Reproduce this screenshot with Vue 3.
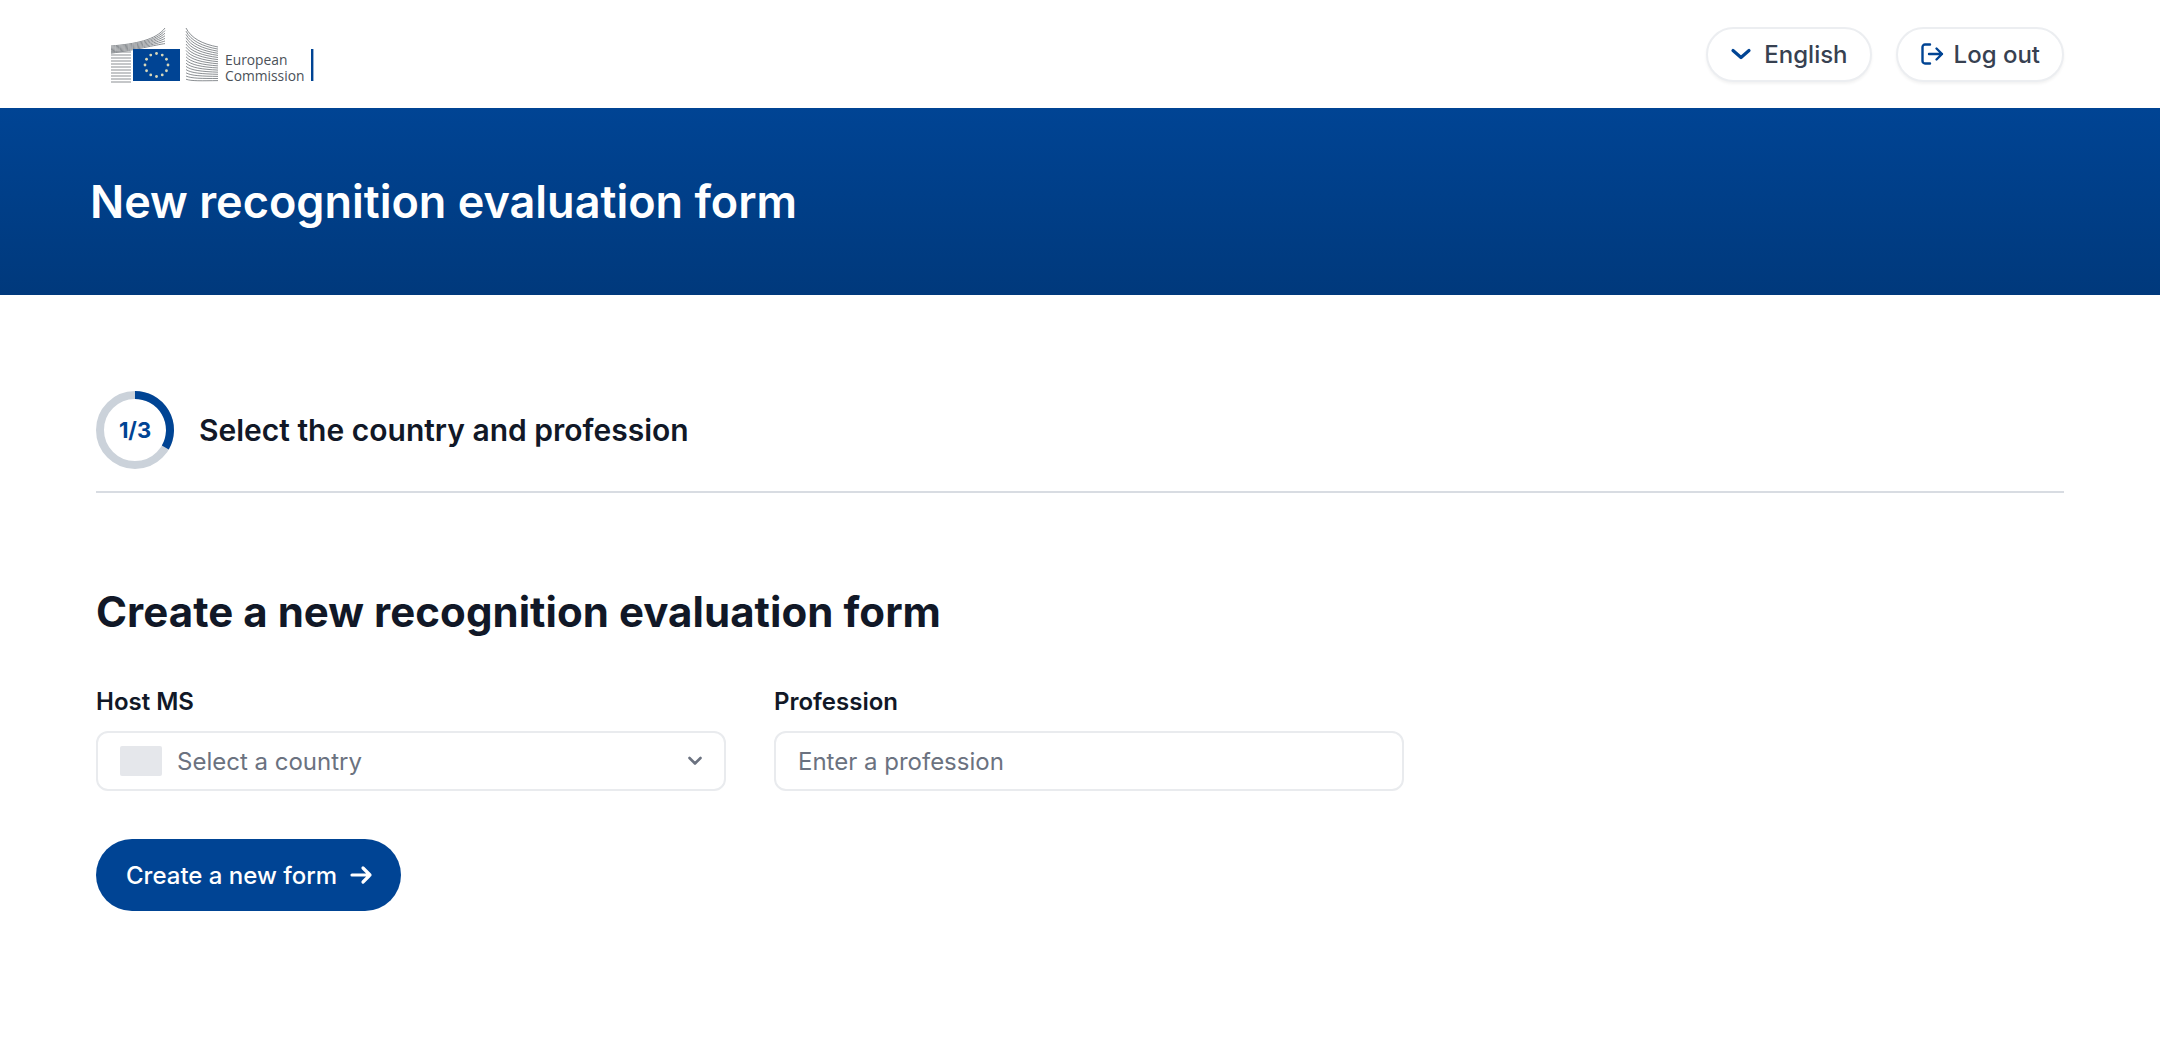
<script setup>
const stars = Array.from({ length: 12 }, (_, i) => {
  const a = (i * Math.PI) / 6
  return { x: 156.5 + 11.5 * Math.sin(a), y: 65 - 11.5 * Math.cos(a) }
})
const frontLines = Array.from({ length: 11 }, (_, i) => 50 + i * 3)
const upperLines = Array.from({ length: 7 }, (_, i) => i)
const rightLines = Array.from({ length: 17 }, (_, i) => i)
</script>

<template>
  <div class="page">
    <header class="topbar">
      <svg class="logo" width="220" height="60" viewBox="105 25 220 60" aria-label="European Commission logo">
        <g stroke="#8b8f93" stroke-width="1" fill="none">
          <path v-for="i in upperLines" :key="'u' + i" :d="`M111 ${46 + i * 1.2} C135 ${44 + i} 156 ${40 + i * 0.8} 165 ${28 + i * 2.6}`" />
          <path v-for="y in frontLines" :key="'f' + y" :d="`M111 ${y + 2} H131`" />
          <path v-for="i in rightLines" :key="'r' + i" :d="`M186 ${28 + i * 3.2} C191 ${38 + i * 2.7} 202 ${44 + i * 2.3} 218 ${47 + i * 2.1}`" />
        </g>
        <rect x="133" y="49" width="47" height="32" fill="#004494" />
        <circle v-for="(s, i) in stars" :key="i" :cx="s.x" :cy="s.y" r="1.4" fill="#d9d8b8" />
        <text x="225" y="65" class="logo-text">European</text>
        <text x="225" y="81" class="logo-text">Commission</text>
        <rect x="311" y="49" width="2.400" height="32" fill="#004494" />
      </svg>
      <div class="top-actions">
        <button class="pill lang">
          <svg width="22" height="22" viewBox="0 0 22 22" fill="none" stroke="#004494" stroke-width="3.200" stroke-linecap="round" stroke-linejoin="round"><path d="M3 7.500l8 7 8-7" /></svg>
          English
        </button>
        <button class="pill">
          <svg width="24" height="24" viewBox="0 0 24 24" fill="none" stroke="#004494" stroke-width="2.400" stroke-linecap="round" stroke-linejoin="round"><path d="M10 2.500H5a2.500 2.500 0 0 0-2.500 2.500v14A2.500 2.500 0 0 0 5 21.500h5" /><path d="M9 12h13M16.500 6.500L22 12l-5.500 5.500" /></svg>
          Log out
        </button>
      </div>
    </header>

    <section class="banner">
      <h1>New recognition evaluation form</h1>
    </section>

    <main class="content">
      <div class="step">
        <div class="ring">
          <svg width="78" height="78" viewBox="0 0 78 78" fill="none">
            <circle cx="39" cy="39" r="35" stroke="#cbd2da" stroke-width="8" />
            <path d="M39 4 A35 35 0 0 1 69.300 56.500" stroke="#004494" stroke-width="8" />
          </svg>
          <span class="ring-label">1/3</span>
        </div>
        <span class="step-title">Select the country and profession</span>
      </div>

      <h2>Create a new recognition evaluation form</h2>

      <div class="fields">
        <div class="field">
          <label>Host MS</label>
          <div class="control">
            <span class="flag"></span>
            <span class="placeholder">Select a country</span>
            <svg class="caret" width="18" height="18" viewBox="0 0 18 18" fill="none" stroke="#6b7280" stroke-width="2.600" stroke-linecap="round" stroke-linejoin="round"><path d="M3.500 6l5.500 5.500L14.500 6" /></svg>
          </div>
        </div>
        <div class="field">
          <label>Profession</label>
          <div class="control">
            <span class="placeholder">Enter a profession</span>
          </div>
        </div>
      </div>

      <button class="primary">
        Create a new form
        <svg width="24" height="24" viewBox="0 0 24 24" fill="none" stroke="#fff" stroke-width="3.200" stroke-linecap="round" stroke-linejoin="round"><path d="M3 12h18M14 5l7 7-7 7" /></svg>
      </button>
    </main>
  </div>
</template>

<style>
html, body { margin: 0; background: #fff; }
</style>

<style scoped>
.page {
  width: 2160px;
  height: 1044px;
  overflow: hidden;
  background: #fff;
  font-family: Inter, "Liberation Sans", sans-serif;
  color: #111827;
}
.topbar {
  height: 108px;
  box-sizing: border-box;
  display: flex;
  align-items: center;
  justify-content: space-between;
  padding: 0 96px 0 105px;
}
.logo { display: block; margin-top: 2px; }
.logo-text { font-family: "Open Sans", sans-serif; font-size: 13.800px; fill: #4b5158; }
.top-actions { display: flex; gap: 24px; }
.pill {
  display: flex;
  align-items: center;
  gap: 10px;
  height: 55px;
  padding: 0 22px;
  box-sizing: border-box;
  background: #fff;
  border: 2px solid #eceef1;
  border-radius: 28px;
  box-shadow: 0 2px 3px rgba(0, 0, 0, 0.05);
  font: 500 24px Inter, sans-serif;
  color: #374151;
}
.lang { gap: 12px; padding-right: 22px; }
.banner {
  height: 187px;
  box-sizing: border-box;
  display: flex;
  align-items: center;
  padding: 0 90px;
  background: linear-gradient(180deg, #004494 0%, #00397c 100%);
}
h1 {
  margin: 0;
  font-size: 45px;
  font-weight: 600;
  line-height: 56px;
  color: #fff;
}
.content { padding: 96px 96px 0; }
.step {
  display: flex;
  align-items: center;
  gap: 24px;
  padding-bottom: 22px;
  border-bottom: 2px solid #d8dce2;
}
.ring { position: relative; width: 78px; height: 78px; }
.ring svg { display: block; }
.ring-label {
  position: absolute;
  inset: 0;
  display: flex;
  align-items: center;
  justify-content: center;
  font-size: 22px;
  font-weight: 700;
  color: #004494;
}
.step-title { font-size: 30px; font-weight: 600; color: #111827; margin-left: 1px; }
h2 {
  margin: 93px 0 0;
  font-size: 42px;
  line-height: 52px;
  letter-spacing: 0.05px;
  font-weight: 700;
  color: #111827;
}
.fields { display: flex; gap: 48px; margin-top: 49px; }
.field { width: 630px; }
label {
  display: block;
  font-size: 24px;
  font-weight: 600;
  line-height: 30px;
  color: #111827;
  margin-bottom: 14px;
}
.control {
  height: 60px;
  box-sizing: border-box;
  display: flex;
  align-items: center;
  padding: 0 22px;
  background: #fff;
  border: 2px solid #e9ebee;
  border-radius: 12px;
}
.flag {
  width: 42px;
  height: 30px;
  margin-right: 15px;
  border-radius: 2px;
  background: #e5e7eb;
}
.placeholder { font-size: 24px; color: #6b7280; }
.caret { margin-left: auto; margin-right: -2px; }
.primary {
  display: flex;
  align-items: center;
  gap: 12px;
  height: 72px;
  margin-top: 48px;
  padding: 0 28px 0 30px;
  background: #004494;
  border: 0;
  border-radius: 36px;
  font: 500 24px Inter, sans-serif;
  color: #fff;
}
</style>
